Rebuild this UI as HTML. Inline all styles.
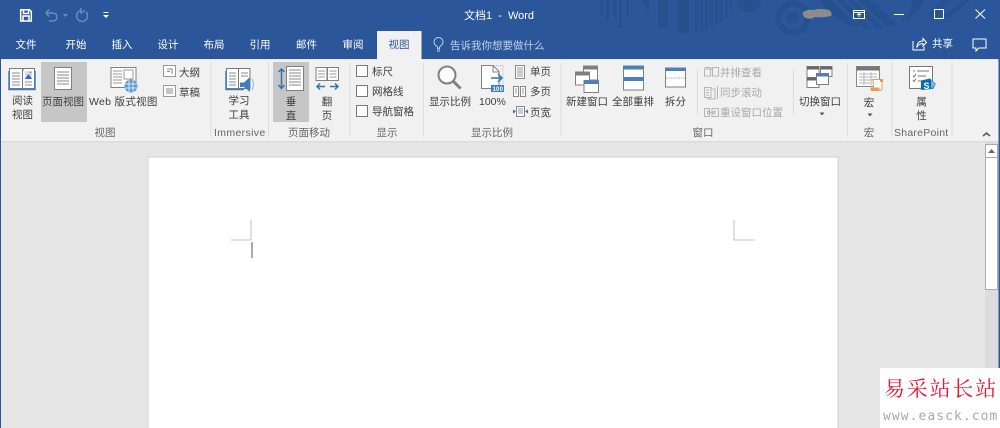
<!DOCTYPE html>
<html lang="zh">
<head>
<meta charset="utf-8">
<title>文档1 - Word</title>
<style>
html,body{margin:0;padding:0;width:1000px;height:428px;overflow:hidden;background:#e6e6e6}
svg{display:block;position:absolute;left:0;top:0}
text{font-family:"Liberation Sans","Noto Sans CJK SC",sans-serif;font-size:10.5px;fill:#3e3e3e}
.m{text-anchor:middle}
.w{fill:#fff}
.g{fill:#666}
.d{fill:#a8a8a8}
.l{stroke:#808080;fill:#fff;stroke-width:1}
.p{stroke:#9a9a9a;fill:none;stroke-width:1}
.b{fill:#2e75b6}
.b2{fill:#4a80bd}
.dk{fill:#26518f}
</style>
</head>
<body>
<svg width="1000" height="428" viewBox="0 0 1000 428" xmlns="http://www.w3.org/2000/svg" style="filter:blur(.35px)">
<rect width="1000" height="428" fill="#e6e6e6"/>
<!-- blue header -->
<rect width="1000" height="59" fill="#2b579a"/>
<clipPath id="hc"><rect width="1000" height="59"/></clipPath>
<g clip-path="url(#hc)">
<g class="dk">
<rect x="600" width="3" height="15"/><rect x="606" width="3" height="21"/><rect x="613" width="3" height="15"/><rect x="619" width="3" height="28"/><rect x="626" width="3" height="18"/>
<path d="M642 0H649V13Z"/>
<path d="M658 0H668V30L658 26Z"/>
<rect x="678" width="11" height="33"/>
<rect x="695" width="3" height="32"/><rect x="700" width="3" height="31"/><rect x="705" width="3" height="29"/><rect x="710" width="3" height="27"/><rect x="715" width="3" height="25"/><rect x="720" width="3" height="22"/><rect x="725" width="3" height="18"/><rect x="729" width="3" height="10"/>
<path d="M737 0A12 12 0 0 0 761 0Z"/>
</g>
<circle cx="793" cy="18" r="14.5" fill="none" stroke="#26518f" stroke-width="6"/>
<circle cx="793" cy="18" r="6" fill="#26518f"/>
<path d="M820 0A57 47 0 0 0 925 0H912A44 33 0 0 1 898 24L870 0Z" fill="#26518f"/>
<g stroke="#2b579a" stroke-width="3">
<path d="M832 -2L868 34M842 -4L878 32M852 -4L888 30"/>
</g>
<path d="M933 17L951 0H943L929 13ZM947 19L971 0H963L943 16Z" fill="#26518f"/>
</g>
<!-- blur smudge -->
<path d="M803 12Q808 9 813 10Q820 8 829 10Q833 13 831 16Q822 18 815 17Q810 20 806 18Q802 16 803 12Z" fill="#8c8c8c"/>

<!-- QAT -->
<g fill="none" stroke="#fff" stroke-width="1.5">
<path d="M20.700 9.700H29.500L31.300 11.500V21H20.700Z"/>
<path d="M23.500 10V13.500H28.500V10M23 21V16H29V21"/>
</g>
<g fill="none" stroke="#6c8dbf" stroke-width="1.400">
<path d="M46 13H53A4 4 0 0 1 53 21H49M49 9.500L46 13L49 16.500"/>
<path d="M86 12A5.500 5.500 0 1 1 81 10.500M81 8V13L85 10.500"/>
</g>
<path d="M63 14H68L65.500 17Z" fill="#6c8dbf"/>
<rect x="103.500" y="12" width="5" height="1" fill="#fff"/>
<path d="M103 15H109L106 18Z" fill="#fff"/>
<text class="m w" x="499" y="19" style="font-size:11px">文档1 &#160;- &#160;Word</text>

<!-- window controls -->
<g fill="none" stroke="#fff" stroke-width="1">
<rect x="853.500" y="10.500" width="11" height="8"/>
<path d="M854 12.500H864"/>
<path d="M859 17V13.500M857 15L859 13.500L861 15"/>
<path d="M894 14.500H904"/>
<rect x="934.500" y="9.500" width="9" height="9"/>
<path d="M975.500 9.500L985 18.500M985 9.500L975.500 18.500"/>
<path d="M913 41V50H924V46.500"/>
<path d="M917 47Q917 41 923 41V38.500L926.500 42.500L923 46V43.500Q919 43.500 917 47Z"/>
<path d="M973 39H986V48H979L976 51V48H973Z"/>
</g>
<text class="w" x="932" y="47">共享</text>

<!-- tabs -->
<rect x="377" y="31" width="44.500" height="30" fill="#f1f1f1"/>
<text class="m w" x="26" y="48">文件</text>
<text class="m w" x="76" y="48">开始</text>
<text class="m w" x="122" y="48">插入</text>
<text class="m w" x="168" y="48">设计</text>
<text class="m w" x="214" y="48">布局</text>
<text class="m w" x="260" y="48">引用</text>
<text class="m w" x="306.500" y="48">邮件</text>
<text class="m w" x="353" y="48">审阅</text>
<text class="m" x="399" y="48" style="fill:#2b579a">视图</text>
<g fill="none" stroke="#c3d2e8" stroke-width="1">
<path d="M437.500 49V47Q434 44.500 434 42A4.500 4.500 0 0 1 443 42Q443 44.500 439.500 47V49Z"/>
<path d="M437 51H440"/>
</g>
<text x="450" y="49" style="fill:#c3d2e8">告诉我你想要做什么</text>

<!-- ribbon -->
<rect y="60" width="1000" height="81" fill="#f1f1f1"/>
<rect y="141" width="1000" height="1.500" fill="#dcdcdc"/>
<rect x="0" y="59" width="1" height="369" fill="#2b579a"/>
<rect x="998.500" y="59" width="1.500" height="369" fill="#2b579a"/>
<rect x="41" y="62" width="46" height="60" fill="#c6c6c6"/>
<rect x="273" y="62" width="36" height="60" fill="#c6c6c6"/>
<g fill="#dcdcdc">
<rect x="210.500" y="63" width="1" height="74"/><rect x="268" y="63" width="1" height="74"/><rect x="349.500" y="63" width="1" height="74"/><rect x="423" y="63" width="1" height="74"/><rect x="560.500" y="63" width="1" height="74"/><rect x="847" y="63" width="1" height="74"/><rect x="891.500" y="63" width="1" height="74"/><rect x="951.500" y="63" width="1" height="74"/><rect x="697" y="68" width="1" height="48"/><rect x="793" y="68" width="1" height="48"/>
</g>

<!-- 阅读视图 icon -->
<path d="M9.500 68.500H22.500L23 70L23.500 68.500H34.500V88.500H9.500Z" fill="#fff" stroke="#7a7a7a"/>
<path d="M9 71V89.500H35V71" fill="none" stroke="#3f7cc0" stroke-width="1.500"/>
<path d="M22.500 69V89" stroke="#777"/>
<path d="M12 73H20M12 76H20M12 79H20M12 82H20M12 85H20M25 82H32M25 85H32" stroke="#8a8a8a"/>
<rect x="25" y="71" width="7" height="8" fill="#cfe0f0"/><path d="M25 79L28.500 74L32 79Z" fill="#2b6cb0"/><circle cx="30.500" cy="72.500" r="1" fill="#e8843a"/>
<text class="m" x="22.500" y="104">阅读</text>
<text class="m" x="22.500" y="118">视图</text>

<!-- 页面视图 icon -->
<rect x="54.500" y="67.500" width="17" height="22" class="l"/>
<path d="M57 72H69M57 75H69M57 78H69M57 81H69M57 84H69" stroke="#8a8a8a"/>
<text class="m" x="63" y="105">页面视图</text>

<!-- Web 版式 icon -->
<rect x="111" y="67.500" width="25" height="20" class="l"/>
<path d="M113 71H122M113 74H122M113 77H122M113 80H122M113 83H122" stroke="#999"/>
<rect x="124" y="70" width="9" height="9" class="p"/>
<circle cx="131" cy="86" r="6.500" fill="#5b97d5"/>
<path d="M125 84H137M125 88H137M129 80V92M133 80V92" stroke="#d6e6f5"/>
<text x="89" y="105" style="letter-spacing:.3px">Web 版式视图</text>

<!-- 大纲 草稿 -->
<rect x="163.500" y="65.500" width="12" height="11" class="l" style="stroke:#999"/><path d="M167 69H172V74M167 71.500H170" stroke="#888" fill="none"/>
<rect x="163.500" y="85.500" width="12" height="11" class="l" style="stroke:#999"/><path d="M166 89H173M166 91H173M166 93H173" stroke="#888"/>
<text x="179" y="76">大纲</text>
<text x="179" y="96">草稿</text>
<text class="m g" x="105" y="136">视图</text>

<!-- 学习工具 icon -->
<path d="M226.500 68.500H250V88.500H226.500Z" fill="#fff" stroke="#7a7a7a"/>
<path d="M226 71V89.500H244" fill="none" stroke="#3f7cc0" stroke-width="1.500"/>
<path d="M238.500 69V89" stroke="#777"/>
<path d="M229 73H236M229 76H236M229 79H236M229 82H236M229 85H236M241 73H248M241 76H248" stroke="#8a8a8a"/>
<path d="M240 82.500H244L250 77V92L244 87H240Z" fill="#3f7cc0"/>
<path d="M252 79Q255 84.500 252 90" fill="none" stroke="#8fb6de"/>
<text class="m" x="239" y="104">学习</text>
<text class="m" x="239" y="118">工具</text>
<text class="g" x="214" y="136" style="letter-spacing:.35px">Immersive</text>

<!-- 垂直 icon -->
<rect x="286.500" y="66.500" width="17" height="24" fill="#fff" stroke="#808080"/>
<path d="M289 70H301M289 73H301M289 76H301M289 79H301M289 82H301M289 85H301" stroke="#8a8a8a"/>
<path d="M281.500 70V88M278.500 72L281.500 69L284.500 72M278.500 85L281.500 88.500L284.500 85" fill="none" stroke="#2e75b6" stroke-width="1.500"/>
<text class="m" x="291" y="105">垂</text>
<text class="m" x="291" y="119">直</text>

<!-- 翻页 icon -->
<rect x="316" y="67.500" width="11" height="13" class="l"/>
<rect x="327.500" y="67.500" width="11" height="13" class="l"/>
<path d="M318 71H325M318 74H325M318 77H325M329.500 71H336.500M329.500 74H336.500M329.500 77H336.500" stroke="#999"/>
<path d="M317 86.500H325M320 83.500L317 86.500L320 89.500M330 86.500H338M335 83.500L338 86.500L335 89.500" fill="none" stroke="#2e75b6" stroke-width="1.500"/>
<text class="m" x="327" y="105">翻</text>
<text class="m" x="327" y="119">页</text>
<text class="m g" x="309" y="136">页面移动</text>

<!-- 显示 -->
<rect x="356.500" y="65.500" width="11" height="11" fill="#fff" stroke="#777"/>
<rect x="356.500" y="85.500" width="11" height="11" fill="#fff" stroke="#777"/>
<rect x="356.500" y="105.500" width="11" height="11" fill="#fff" stroke="#777"/>
<text x="372" y="75">标尺</text>
<text x="372" y="95">网格线</text>
<text x="372" y="115">导航窗格</text>
<text class="m g" x="387" y="136">显示</text>

<!-- 显示比例 -->
<circle cx="447" cy="75" r="8.500" fill="#fdfdfd" stroke="#808080" stroke-width="2"/>
<path d="M453 81L460.500 88.500" stroke="#808080" stroke-width="3"/>
<text x="429" y="105">显示比例</text>

<path d="M481.500 65.500H493L499 71.500V88.500H481.500Z" class="l"/>
<path d="M493 66V72H499" fill="none" stroke="#808080"/>
<path d="M494 65.500H503V84" fill="none" stroke="#bbb" stroke-dasharray="1 1"/>
<path d="M491 78H502M498 74L502 78L498 82" fill="none" stroke="#2e75b6" stroke-width="1.500"/>
<rect x="491" y="85" width="13" height="7" fill="#3f7cc0"/>
<text x="492.500" y="91" style="font-size:6px;fill:#fff;font-weight:bold;letter-spacing:.2px">100</text>
<text x="479" y="105">100%</text>

<rect x="515.500" y="65.500" width="9" height="13" class="l" style="stroke:#888"/>
<path d="M517 68H523M517 70H523M517 72H523M517 74H523M517 76H523" stroke="#999"/>
<rect x="513.500" y="86.500" width="5" height="10" class="l" style="stroke:#888"/>
<rect x="520.500" y="86.500" width="5" height="10" class="l" style="stroke:#888"/>
<path d="M515 89H517M515 91H517M515 93H517M522 89H524M522 91H524M522 93H524" stroke="#999"/>
<rect x="516.500" y="106.500" width="8" height="10" class="l" style="stroke:#888"/>
<path d="M518 109H523M518 111H523M518 113H523" stroke="#999"/>
<path d="M516 111.500L513 109.500V113.500ZM525 111.500L528 109.500V113.500Z" fill="#2e75b6"/>
<text x="530" y="75">单页</text>
<text x="530" y="95">多页</text>
<text x="530" y="116">页宽</text>
<text class="m g" x="492" y="136">显示比例</text>

<!-- 窗口 -->
<g>
<rect x="583.500" y="66" width="14" height="14" class="l"/><rect x="583.500" y="66" width="14" height="3.500" fill="#7f7f7f"/>
<rect x="575.500" y="72" width="14" height="13" class="l"/><rect x="575.500" y="72" width="14" height="3.500" fill="#7f7f7f"/>
<rect x="584" y="80.500" width="14.500" height="12" class="l"/><rect x="584" y="80.500" width="14.500" height="3.500" fill="#4a80bd"/>
</g>
<text x="566" y="105">新建窗口</text>
<rect x="623.500" y="66" width="20" height="24" class="l"/>
<rect x="623" y="65.500" width="21" height="4" class="b2"/><rect x="623" y="77" width="21" height="4" class="b2"/>
<text x="612" y="105">全部重排</text>
<rect x="665.500" y="68" width="20" height="19" class="l"/>
<rect x="665" y="67.500" width="21" height="3.500" class="b2"/>
<path d="M666 78H685" stroke="#88b0da" stroke-dasharray="1.500 1"/>
<text x="665" y="105">拆分</text>

<g fill="none" stroke="#b5b5b5">
<path d="M704.500 67.500H710L711.500 69H704.500V76H710.500V69M712.500 69V67.500H718.500V76H712.500Z"/>
<path d="M704.500 87.500H711V97.500H704.500ZM711 89H715V99H708V97.500M706 90H709M706 92.500H709M706 95H709M717.500 86V99"/>
<path d="M704.500 108.500H709.500V116.500H704.500ZM712 108.500H718.500V116.500H712ZM707.500 111L711 112.500L707.500 114ZM715 111L712 112.500L715 114Z"/>
</g>
<text class="d" x="720" y="76">并排查看</text>
<text class="d" x="720" y="96">同步滚动</text>
<text class="d" x="720" y="116">重设窗口位置</text>
<text class="m g" x="703" y="136">窗口</text>

<!-- 切换窗口 -->
<rect x="807" y="66.500" width="12" height="16" class="l"/><rect x="807" y="66.500" width="12" height="3" fill="#666"/>
<rect x="820.500" y="66.500" width="11.500" height="10" class="l"/><rect x="820.500" y="66.500" width="11.500" height="3" fill="#666"/>
<rect x="807" y="77.500" width="12" height="10" class="l"/><rect x="807" y="77.500" width="12" height="3" fill="#666"/>
<rect x="816.500" y="73.500" width="12" height="11" class="l"/><rect x="816.500" y="73.500" width="12" height="3" fill="#4a80bd"/>
<text x="799" y="105">切换窗口</text>
<path d="M819.500 112.500H824.500L822 115.500Z" fill="#555"/>

<!-- 宏 -->
<rect x="856.500" y="66.500" width="23" height="20" fill="#fff" stroke="#888"/>
<rect x="856.500" y="66.500" width="23" height="4" fill="#777"/>
<path d="M859 74H877M859 77H877M859 80H877M859 83H870M864 72V85M871 72V85" stroke="#b5b5b5"/>
<path d="M873 79.500H882V88.500Q882 90.500 879 90.500H871Q873.500 90 873.500 88Z" fill="#fff" stroke="#e59a5c"/>
<rect x="870.500" y="87.500" width="9" height="3" fill="#ea9a5a"/>
<rect x="880" y="79" width="3" height="3" fill="#e59a5c"/>
<text class="m" x="869" y="106">宏</text>
<path d="M867.500 113.500H872.500L870 116.500Z" fill="#555"/>
<text class="m g" x="869" y="136">宏</text>

<!-- 属性 -->
<rect x="909.500" y="66.500" width="23" height="22" fill="#fff" stroke="#777"/>
<path d="M913 71H915M917 71H929M913 75.500L914 77L916 74M918 76H926M913 80L914 81.500L916 78.500M918 81H924" fill="none" stroke="#777"/>
<path d="M921 80.500L930 78.500L936 84L933 89H932L921 90Z" fill="#0a6cb8"/>
<path d="M931 80L936 84.500L931 89Z" fill="#6eb6e6"/>
<text x="923.500" y="89" style="font-size:9px;fill:#fff;font-weight:bold">S</text>
<text class="m" x="921.500" y="105">属</text>
<text class="m" x="921.500" y="119">性</text>
<text class="g" x="894" y="136" style="letter-spacing:.25px">SharePoint</text>
<path d="M983 136L986.500 133L990 136" fill="none" stroke="#555" stroke-width="1.500"/>

<!-- document -->
<rect x="148" y="157" width="690" height="280" fill="#fff" stroke="#d2d2d2"/>
<path d="M251 220V240H231" fill="none" stroke="#c2c2c2"/>
<path d="M734 220V240H755" fill="none" stroke="#c2c2c2"/>
<rect x="251.500" y="242" width="1" height="16" fill="#555"/>

<!-- scrollbar -->
<rect x="985" y="142" width="13.500" height="286" fill="#dcdcdc"/>
<rect x="985.500" y="144.500" width="12" height="13" fill="#fff" stroke="#ababab"/>
<path d="M988 153L991.500 149L995 153Z" fill="#666"/>
<rect x="985.500" y="157.500" width="12" height="132" fill="#fff" stroke="#ababab"/>

<!-- watermark -->
<rect x="880" y="368" width="120" height="60" fill="#fff"/>
<text x="884" y="396" style="font-family:'Noto Serif CJK SC','Liberation Serif',serif;font-size:21px;fill:#f01030;letter-spacing:1.800px">易采站长站</text>
<text x="883" y="420" style="font-family:'DejaVu Sans Mono','Liberation Mono',monospace;font-size:13px;fill:#b0a6a6;letter-spacing:1.050px">www.easck.com</text>
</svg>
</body>
</html>
